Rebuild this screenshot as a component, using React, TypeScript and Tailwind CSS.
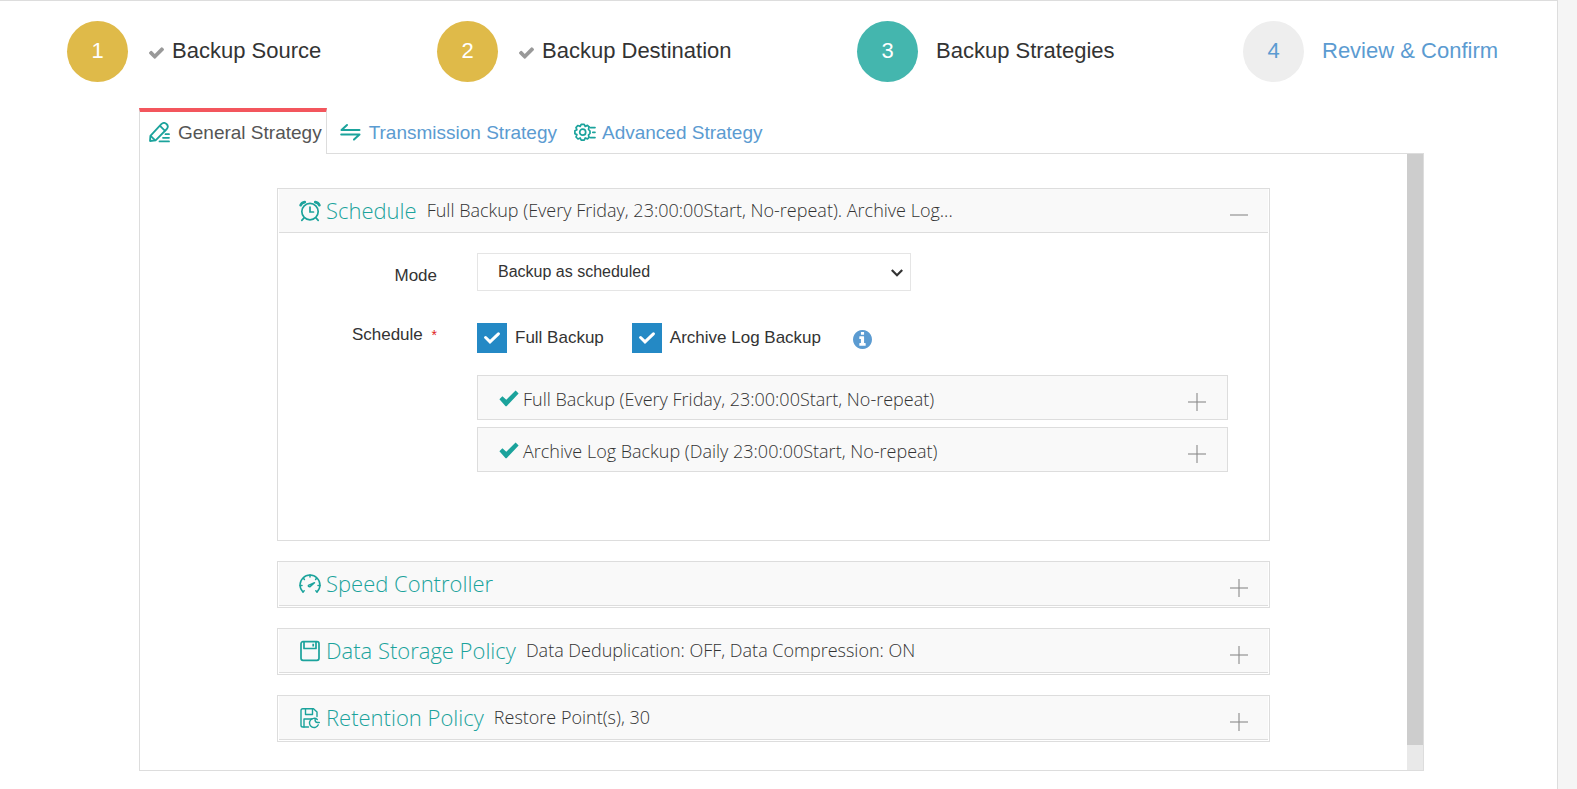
import React, { useState } from 'react';

const steps = [
  { id: 1, label: 'Backup Source', state: 'done' },
  { id: 2, label: 'Backup Destination', state: 'done' },
  { id: 3, label: 'Backup Strategies', state: 'active' },
  { id: 4, label: 'Review & Confirm', state: 'todo' },
];

const circleColors: Record<string, string> = {
  done: 'bg-[#dfba49] text-white',
  active: 'bg-[#44b6ae] text-white',
  todo: 'bg-[#eeeeee] text-[#5b9bd1]',
};

const CheckIcon = ({ className }: { className: string }) => (
  <svg className={className} viewBox="121 334 1550 1188" fill="currentColor" aria-hidden="true">
    <path d="M1671 566q0 40-28 68l-724 724-136 136q-28 28-68 28t-68-28l-136-136-362-362q-28-28-28-68t28-68l136-136q28-28 68-28t68 28l294 295 656-657q28-28 68-28t68 28l136 136q28 28 28 68z" />
  </svg>
);

const OkIcon = () => (
  <svg className="mt-0.5 h-[17px] w-5 shrink-0 text-[#1ba39c]" viewBox="0 0 20 17" fill="currentColor" aria-hidden="true">
    <path d="M0.4 9.2 3.4 6.2 7.3 9.7 16.6 0.5 19.6 3.4 7.6 16.2 6.6 16.2Z" />
  </svg>
);

const ToggleIcon = ({ open }: { open?: boolean }) => (
  <svg className="mt-2 h-[18px] w-[18px] shrink-0" viewBox="0 0 18 18" stroke="#8a8a8a" strokeOpacity="0.55" strokeWidth="2" aria-hidden="true">
    <path d="M0 9H18" />
    {!open && <path d="M9 0V18" />}
  </svg>
);

const EditIcon = () => (
  <svg className="h-[21px] w-[21px] text-[#1ba39c]" viewBox="0 0 21 21" fill="none" stroke="currentColor" strokeWidth="1.8" strokeLinejoin="round" strokeLinecap="round" aria-hidden="true">
    <path d="M1 19 1.400 13.800 12.300 2.200Q15 -.3 17.500 2T17.800 7L6.600 18.400Z" />
    <path d="M11.300 4.200 15.800 8.600M1.900 14.200 6 18.200" />
    <path d="M16.500 12.200H20M14 15.800H20M10.500 19.400H20" />
  </svg>
);

const TransferIcon = () => (
  <svg className="h-[21px] w-[21px] text-[#1ba39c]" viewBox="0 0 21 21" fill="none" stroke="currentColor" strokeWidth="2" strokeLinejoin="round" strokeLinecap="round" aria-hidden="true">
    <path d="M7 3 1.500 8H19.500" />
    <path d="M1.200 12.500H19.500L14 17.600" />
  </svg>
);

const GearIcon = () => (
  <svg className="h-[21px] w-[22px] text-[#1ba39c]" viewBox="0 0 22 21" fill="none" stroke="currentColor" strokeWidth="1.700" strokeLinejoin="round" strokeLinecap="round" aria-hidden="true">
    <path d="M15 4.800 13.500 3.400 11.200 4.400 10.200 2.300H7.200L6.200 4.400 3.800 3.500 2 5.600 2.900 7.800 .9 8.800V11.700L2.900 12.600 2 15 4 17 6.200 16 7.200 18.200H10.200L11.200 16 13.500 16.900 15 15.500" />
    <path d="M15 4.800 14.500 7.500 16 9V11.500L14.500 13 15 15.500" />
    <circle cx="8.700" cy="10.200" r="3" />
    <path d="M16.500 5.600H21M18.800 10.300H21M16.500 15.600H21" />
  </svg>
);

const AlarmIcon = () => (
  <svg className="h-[22px] w-[22px]" viewBox="0 0 22 22" fill="none" stroke="currentColor" strokeWidth="1.7" strokeLinecap="round" aria-hidden="true">
    <circle cx="11" cy="11.600" r="8.200" />
    <path d="M11 7V12H14.500M4.800 18.200 2.800 20.300M17.200 18.200 19.200 20.300" />
    <path strokeWidth="2.600" d="M1.600 5.200Q2.600 2.600 5.800 2.100M20.400 5.200Q19.400 2.600 16.200 2.100" />
  </svg>
);

const GaugeIcon = () => (
  <svg className="h-[22px] w-[22px]" viewBox="0 0 22 22" fill="none" stroke="currentColor" strokeWidth="1.5" strokeLinecap="round" strokeLinejoin="round" aria-hidden="true">
    <path d="M4 19Q1 16 1 12A10 10 0 0 1 21 12Q21 16 18 19" />
    <path d="M11 2V4M4.500 5.500 5.400 6.400M17.500 5.500 16.600 6.400M1 12.500H3M21 12.500H19M4 19 5.200 17.800M18 19 16.800 17.800" />
    <path d="M15.500 9.800 11 13.800Q9 14 9.400 12.400Z" />
  </svg>
);

const DiskIcon = () => (
  <svg className="h-[22px] w-[22px]" viewBox="0 0 22 22" fill="none" stroke="currentColor" strokeWidth="1.7" strokeLinejoin="round" aria-hidden="true">
    <rect x="2" y="1.700" width="18" height="18.600" rx="2" />
    <path d="M5 2V8.500H17V2M14.200 3.800V6.500" />
  </svg>
);

const DiskClockIcon = () => (
  <svg className="h-[22px] w-[22px]" viewBox="0 0 22 22" fill="none" stroke="currentColor" strokeWidth="1.400" strokeLinejoin="round" strokeLinecap="round" aria-hidden="true">
    <path d="M9.500 20H3.800Q2 20 2 18.200V3.500Q2 1.700 3.800 1.700H14.500L18 5V9.500" />
    <path d="M6.500 2V7.500H13.500V2M5 20V12H13" />
    <path d="M18.300 12.600A4.600 4.600 0 1 0 19.300 17.800M16 12.500Q16 15.500 18.500 15.500H20.300" />
  </svg>
);

const InfoIcon = () => (
  <svg className="h-[19px] w-[19px]" viewBox="0 0 1536 1536" fill="#5b9bd1" aria-hidden="true">
    <path d="M1024 1248v-160q0-14-9-23t-23-9h-96V544q0-14-9-23t-23-9H544q-14 0-23 9t-9 23v160q0 14 9 23t23 9h96v320h-96q-14 0-23 9t-9 23v160q0 14 9 23t23 9h448q14 0 23-9t9-23zM896 352V192q0-14-9-23t-23-9H672q-14 0-23 9t-9 23v160q0 14 9 23t23 9h192q14 0 23-9t9-23zm640 416q0 209-103 385.500T1153.500 1433 768 1536t-385.500-103T103 1153.500 0 768t103-385.500T382.500 103 768 0t385.500 103T1433 382.500 1536 768z" />
  </svg>
);

interface SectionProps {
  icon: React.ReactNode;
  title: string;
  summary?: string;
  open?: boolean;
  children?: React.ReactNode;
}

const Section: React.FC<SectionProps> = ({ icon, title, summary, open, children }) => (
  <section className="border border-[#dddddd] px-px pb-px">
    <button
      type="button"
      aria-expanded={!!open}
      className="flex h-11 w-full items-center border-b border-[#dddddd] bg-[#f9f9f9] pl-5 pr-5 text-left font-['Open_Sans',sans-serif] font-light"
    >
      <span className="flex items-center gap-[5px] text-[22px] leading-8 text-[#1ba39c]">
        {icon}
        <span className="pb-0.5">{title}</span>
      </span>
      {summary && <span className="ml-2.5 pb-px text-[18px] leading-6 text-[#333333]">{summary}</span>}
      <span className="ml-auto">
        <ToggleIcon open={open} />
      </span>
    </button>
    {children}
  </section>
);

const SchedulePlan = ({ text }: { text: string }) => (
  <button
    type="button"
    aria-expanded="false"
    className="flex h-[45px] w-full items-center border border-[#dddddd] bg-[#f9f9f9] pl-[21px] pr-[21px] text-left font-['Open_Sans',sans-serif] text-[18px] leading-6 font-light text-[#333333]"
  >
    <OkIcon />
    <span className="ml-1 pt-0.5">{text}</span>
    <span className="ml-auto">
      <ToggleIcon />
    </span>
  </button>
);

interface CheckboxProps {
  label: string;
  checked: boolean;
  onChange: (value: boolean) => void;
}

const Checkbox: React.FC<CheckboxProps> = ({ label, checked, onChange }) => (
  <label className="flex items-center gap-2">
    <span className="grid h-[30px] w-[30px] place-items-center">
      <input
        type="checkbox"
        checked={checked}
        onChange={(e) => onChange(e.target.checked)}
        className="col-start-1 row-start-1 h-[30px] w-[30px] appearance-none border border-[#2489c5] bg-white checked:bg-[#2489c5]"
      />
      {checked && (
        <svg className="pointer-events-none col-start-1 row-start-1 h-4 w-4" viewBox="0 0 16 16" fill="none" stroke="white" strokeWidth="3" strokeLinecap="round" aria-hidden="true">
          <path d="M1.600 7.500 6 11.800 14.400 3.800" />
        </svg>
      )}
    </span>
    {label}
  </label>
);

const App: React.FC = () => {
  const [mode, setMode] = useState('scheduled');
  const [full, setFull] = useState(true);
  const [archive, setArchive] = useState(true);

  return (
    <div className="min-h-screen bg-[#f5f5f5] pr-[19px] font-['Liberation_Sans',Arial,sans-serif] text-[#333333]">
      <main className="min-h-screen border-t border-r border-[#dddddd] bg-white pt-5">
        <ol className="grid grid-cols-[370fr_420fr_386fr_314fr] pl-[67px] text-[22px] leading-8">
          {steps.map((step) => (
            <li key={step.id}>
              <a href="#" className="flex items-center" aria-current={step.state === 'active' ? 'step' : undefined}>
                <span className={`flex h-[61px] w-[61px] items-center justify-center rounded-full pb-0.5 ${circleColors[step.state]}`}>
                  {step.id}
                </span>
                {step.state === 'done' && <CheckIcon className="ml-[21px] mt-0.5 h-3 w-[15px] text-[#999999]" />}
                <span className={`pb-0.5 ${step.state === 'done' ? 'ml-2' : 'ml-[18px]'} ${step.state === 'todo' ? 'text-[#5b9bd1]' : ''}`}>
                  {step.label}
                </span>
              </a>
            </li>
          ))}
        </ol>

        <div className="mt-[26px] mr-[133px] ml-[139px]">
          <div role="tablist" className="flex gap-1 text-[19px] leading-6 text-[#5b9bd1]">
            <button
              type="button"
              role="tab"
              aria-selected="true"
              className="relative -mb-px flex h-[46px] items-center gap-2 border-x border-t-4 border-x-[#dddddd] border-t-[#f3565d] bg-white pr-1 pb-px pl-[9px] text-[#555555]"
            >
              <EditIcon />
              General Strategy
            </button>
            <button type="button" role="tab" aria-selected="false" className="flex items-center gap-2 pt-1 pr-1 pl-[9px]">
              <TransferIcon />
              Transmission Strategy
            </button>
            <button type="button" role="tab" aria-selected="false" className="flex items-center gap-1.5 pt-1 pr-1 pl-[9px]">
              <GearIcon />
              Advanced Strategy
            </button>
          </div>

          <div role="tabpanel" className="flex border border-[#dddddd]">
            <div className="flex grow flex-col gap-5 px-[137px] pt-[34px] pb-7">
              <Section icon={<AlarmIcon />} title="Schedule" summary="Full Backup (Every Friday, 23:00:00Start, No-repeat). Archive Log..." open>
                <div className="pt-5 pr-10 pb-[67px] text-[17px] leading-6">
                  <div className="flex gap-10">
                    <label htmlFor="mode" className="w-[158px] pt-[11px] text-right">
                      Mode
                    </label>
                    <div className="relative w-[434px]">
                      <select
                        id="mode"
                        value={mode}
                        onChange={(e) => setMode(e.target.value)}
                        className="h-[38px] w-full appearance-none border border-[#e5e5e5] bg-white px-5 text-[16px]"
                      >
                        <option value="scheduled">Backup as scheduled</option>
                        <option value="once">One-time backup</option>
                      </select>
                      <svg className="pointer-events-none absolute top-4 right-2 h-2 w-3" viewBox="0 0 12 8" fill="none" stroke="#333333" strokeWidth="2.200" aria-hidden="true">
                        <path d="M.8 1 6 6.200 11.200 1" />
                      </svg>
                    </div>
                  </div>

                  <div className="mt-8 flex gap-10">
                    <div id="schedule-label" className="w-[158px] text-right">
                      Schedule <span className="ml-1 text-[14px] text-[#e02222]">*</span>
                    </div>
                    <div role="group" aria-labelledby="schedule-label" className="grow">
                      <div className="flex items-center">
                        <Checkbox label="Full Backup" checked={full} onChange={setFull} />
                        <div className="ml-7">
                          <Checkbox label="Archive Log Backup" checked={archive} onChange={setArchive} />
                        </div>
                        <button type="button" aria-label="About archive log backup" className="ml-8 pt-0.5">
                          <InfoIcon />
                        </button>
                      </div>
                      <div className="mt-[22px] flex flex-col gap-[7px]">
                        <SchedulePlan text="Full Backup (Every Friday, 23:00:00Start, No-repeat)" />
                        <SchedulePlan text="Archive Log Backup (Daily 23:00:00Start, No-repeat)" />
                      </div>
                    </div>
                  </div>
                </div>
              </Section>
              <Section icon={<GaugeIcon />} title="Speed Controller" />
              <Section icon={<DiskIcon />} title="Data Storage Policy" summary="Data Deduplication: OFF, Data Compression: ON" />
              <Section icon={<DiskClockIcon />} title="Retention Policy" summary="Restore Point(s), 30" />
            </div>
            {/* scroll track */}
            <div className="flex w-4 shrink-0 bg-[#e9e9e9] pb-[25px]">
              <div className="grow bg-[#cdcdcd]" />
            </div>
          </div>
        </div>
      </main>
    </div>
  );
};

export default App;
